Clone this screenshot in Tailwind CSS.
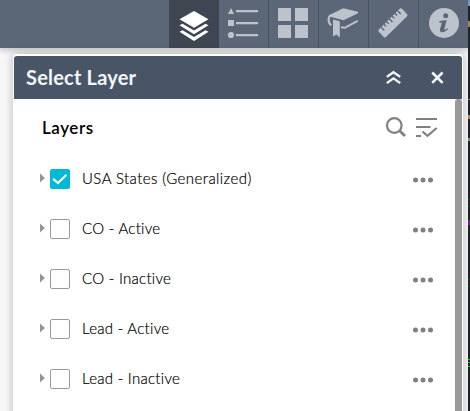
<!DOCTYPE html>
<html lang="en">
<head>
<meta charset="utf-8">
<title>Select Layer</title>
<script src="https://cdn.jsdelivr.net/npm/@tailwindcss/browser@4"></script>
</head>
<body class="w-[470px] h-[411px] overflow-hidden flex bg-[#f6f6f6] font-['Lato',sans-serif]">
<div class="w-[468px] h-[411px] flex flex-col overflow-hidden bg-[#f7f7f7]">
  <nav class="relative h-12 shrink-0 flex justify-end bg-[#5b6777] shadow-[0_1px_6px_1px_rgba(0,0,0,0.22)]">
    <button class="w-[50px] h-12 bg-[#3f4651]" aria-label="Layers">
      <svg class="w-[50px] h-12" viewBox="0 0 50 48" fill="#fff"><path d="M25 11 39.5 19.2 25 27.7 10.5 19.2Z"/><path d="M10.5 25.2 13.5 23.8 25 30.5 36.5 23.8 39.5 25.2 25 34.3Z"/><path d="M10.5 31.7 13.5 30.2 25 37 36.5 30.2 39.5 31.7 25 41Z"/></svg>
    </button>
    <button class="w-[50px] h-12 border-r border-[#465266]" aria-label="Legend">
      <svg class="w-[49px] h-12" viewBox="0 0 49 48" fill="#bdc3cb"><path d="M12 8 15 14H9Z"/><path d="M9 20h6v6H9zM17 10h22v2.2H17zM17 22h22v2.2H17zM17 34h22v2.2H17z"/><circle cx="12" cy="35" r="3.1"/></svg>
    </button>
    <button class="w-[50px] h-12 border-r border-[#465266]" aria-label="Basemap gallery">
      <svg class="w-[49px] h-12" viewBox="0 0 49 48" fill="#bdc3cb"><path d="M9 8h13v13H9zM26 8h13v13H26zM9 25h13v13H9zM26 25h13v13H26z"/></svg>
    </button>
    <button class="w-[50px] h-12 border-r border-[#465266]" aria-label="Bookmarks">
      <svg class="w-[49px] h-12" viewBox="0 0 49 48"><path d="M10 15.2 24.2 8.3 39 11.7V13.3L24.5 20.2 10 16.5Z" fill="#bdc3cb"/><path d="M12 15.2C8.7 17 8.7 22.5 12.3 25.2M22 27.2 25.8 27.8 38.7 20.8" fill="none" stroke="#bdc3cb" stroke-width="2"/><path d="M14 19.5 20.8 21.2V37.7L17.6 34.5 14 36.6Z" fill="#bdc3cb"/></svg>
    </button>
    <button class="w-[50px] h-12 border-r border-[#465266]" aria-label="Measurement">
      <svg class="w-[49px] h-12" viewBox="0 0 49 48"><path d="M31 8.6Q32 7.8 33 8.7L38.1 14.2Q38.8 15.3 38 16.2L17 37Q15.8 38 14.7 36.9L9.6 31.4Q9 30.4 9.8 29.5Z" fill="#bdc3cb"/><path d="M12 27.2 15.2 30.2M15 24.2 17 26.2M17.7 21.7 19.7 23.7M20.4 19 23.4 22M23.2 16.3 25.2 18.3M26 13.6 28 15.6M28.8 10.9 31.8 13.9" stroke="#5b6777" stroke-width="1.4"/></svg>
    </button>
    <button class="w-[49px] h-12" aria-label="About">
      <svg class="w-[49px] h-12" viewBox="0 0 49 48"><circle cx="25" cy="23" r="15" fill="#bdc3cb"/><circle cx="26.7" cy="15.7" r="2.5" fill="#5b6777"/><path d="M20.2 21.3Q24 20.2 27.7 20.3L25.2 29.2Q25.1 30.5 28.5 28.3L29 29.2Q25.3 32.5 22.4 32.2 20.4 31.8 21 29.3L22.8 22.7 20.3 22.5Z" fill="#5b6777"/></svg>
    </button>
  </nav>
  <main class="flex-1 relative pl-[13px] pt-1.5">
    <section class="w-[450px] h-[380px] bg-white rounded-t-[4px] p-px pt-0.5 shadow-[0_0_8px_1px_rgba(0,0,0,0.22)] flex flex-col">
      <header class="h-[43px] shrink-0 rounded-t-[3px] bg-[#485566] flex items-center text-[#f4f6f8] pl-3">
        <h1 class="w-[350px] pb-0.5 text-[20px] leading-6 font-bold tracking-[0.2px]">Select Layer</h1>
        <svg class="w-[72px] h-[43px]" viewBox="0 0 72 43" fill="none" stroke="#f4f6f8" stroke-width="2.3"><path d="M10.8 20.9 17.5 16.2 24.2 20.9M10.8 27.1 17.5 22.4 24.2 27.1"/><path d="M56.2 16.5 66.6 26.8M66.6 16.5 56.2 26.8" stroke-width="2.6"/></svg>
      </header>
      <div class="flex flex-1">
        <div class="w-[441px] pl-[26px]">
          <div class="h-[55px] flex items-center pt-[3px]">
            <h2 class="w-[345px] pl-0.5 text-[17px] leading-5 font-semibold tracking-[0.55px] text-black">Layers</h2>
            <svg class="w-14 h-7" viewBox="0 0 56 28" fill="none" stroke="#808080" stroke-width="2.2"><circle cx="9.3" cy="11.5" r="7.3"/><path d="M14.6 16.8 20 22" stroke-width="2.8"/><path d="M31 5H52M31 13H45.5M31 22H36M37.5 17.5 42.5 21.8 51.7 14"/></svg>
          </div>
          <ul class="text-[15px] leading-5 text-black font-light tracking-[0.28px] [-webkit-text-stroke:0.2px_#000]">
            <li class="h-[50px] flex items-center">
              <svg class="w-2.5 h-5 shrink-0" viewBox="0 0 10 20" fill="#959595"><path d="M0 4.5 5 9 0 13.5Z"/></svg>
              <span class="w-5 h-5 shrink-0 rounded-[2px] bg-[#00b9d5]"><svg class="w-5 h-5" viewBox="0 0 20 20" fill="none" stroke="#fff" stroke-width="2.2"><path d="M3.2 9.8 8 14 16.5 5.8"/></svg></span>
              <span class="w-[340px] pl-3 pb-0.5 tracking-[0.43px]">USA States (Generalized)</span>
              <svg class="w-6 h-5 shrink-0" viewBox="0 0 24 20" fill="#808080"><circle cx="5.5" cy="11" r="2.5"/><circle cx="13" cy="11" r="2.5"/><circle cx="20.5" cy="11" r="2.5"/></svg>
            </li>
            <li class="h-[50px] flex items-center">
              <svg class="w-2.5 h-5 shrink-0" viewBox="0 0 10 20" fill="#959595"><path d="M0 4.5 5 9 0 13.5Z"/></svg>
              <span class="w-5 h-5 shrink-0 rounded-[2px] border border-[#999]"></span>
              <span class="w-[340px] pl-3 pb-0.5">CO - Active</span>
              <svg class="w-6 h-5 shrink-0" viewBox="0 0 24 20" fill="#808080"><circle cx="5.5" cy="11" r="2.5"/><circle cx="13" cy="11" r="2.5"/><circle cx="20.5" cy="11" r="2.5"/></svg>
            </li>
            <li class="h-[50px] flex items-center">
              <svg class="w-2.5 h-5 shrink-0" viewBox="0 0 10 20" fill="#959595"><path d="M0 4.5 5 9 0 13.5Z"/></svg>
              <span class="w-5 h-5 shrink-0 rounded-[2px] border border-[#999]"></span>
              <span class="w-[340px] pl-3 pb-0.5">CO - Inactive</span>
              <svg class="w-6 h-5 shrink-0" viewBox="0 0 24 20" fill="#808080"><circle cx="5.5" cy="11" r="2.5"/><circle cx="13" cy="11" r="2.5"/><circle cx="20.5" cy="11" r="2.5"/></svg>
            </li>
            <li class="h-[50px] flex items-center">
              <svg class="w-2.5 h-5 shrink-0" viewBox="0 0 10 20" fill="#959595"><path d="M0 4.5 5 9 0 13.5Z"/></svg>
              <span class="w-5 h-5 shrink-0 rounded-[2px] border border-[#999]"></span>
              <span class="w-[340px] pl-3 pb-0.5">Lead - Active</span>
              <svg class="w-6 h-5 shrink-0" viewBox="0 0 24 20" fill="#808080"><circle cx="5.5" cy="11" r="2.5"/><circle cx="13" cy="11" r="2.5"/><circle cx="20.5" cy="11" r="2.5"/></svg>
            </li>
            <li class="h-[50px] flex items-center">
              <svg class="w-2.5 h-5 shrink-0" viewBox="0 0 10 20" fill="#959595"><path d="M0 4.5 5 9 0 13.5Z"/></svg>
              <span class="w-5 h-5 shrink-0 rounded-[2px] border border-[#999]"></span>
              <span class="w-[340px] pl-3 pb-0.5">Lead - Inactive</span>
              <svg class="w-6 h-5 shrink-0" viewBox="0 0 24 20" fill="#808080"><circle cx="5.5" cy="11" r="2.5"/><circle cx="13" cy="11" r="2.5"/><circle cx="20.5" cy="11" r="2.5"/></svg>
            </li>
          </ul>
        </div>
        <div class="w-[7px] rounded-t-[3px] bg-[#999]"></div>
      </div>
    </section>
  </main>
</div>
<svg class="w-0.5 h-[411px] shrink-0" viewBox="0 0 2 411" shape-rendering="crispEdges"><path fill="#20222b" d="M0 0h2v411H0z"/><path fill="#7199bd" d="M0 0h2v6H0z"/><path fill="#a77f55" d="M0 21h2v6H0zM0 115h2v4H0z"/><path fill="#789577" d="M0 99h2v1H0zM0 138h2v3H0z"/><path fill="#075015" d="M0 199h2v1H0zM0 206h2v1H0zM0 279h2v1H0zM0 286h2v1H0z"/><path fill="#781b9b" d="M0 220h2v5H0z"/><path fill="#00d416" d="M0 359h2v1H0zM0 362h2v1H0zM0 366h2v1H0z"/></svg>
</body>
</html>
